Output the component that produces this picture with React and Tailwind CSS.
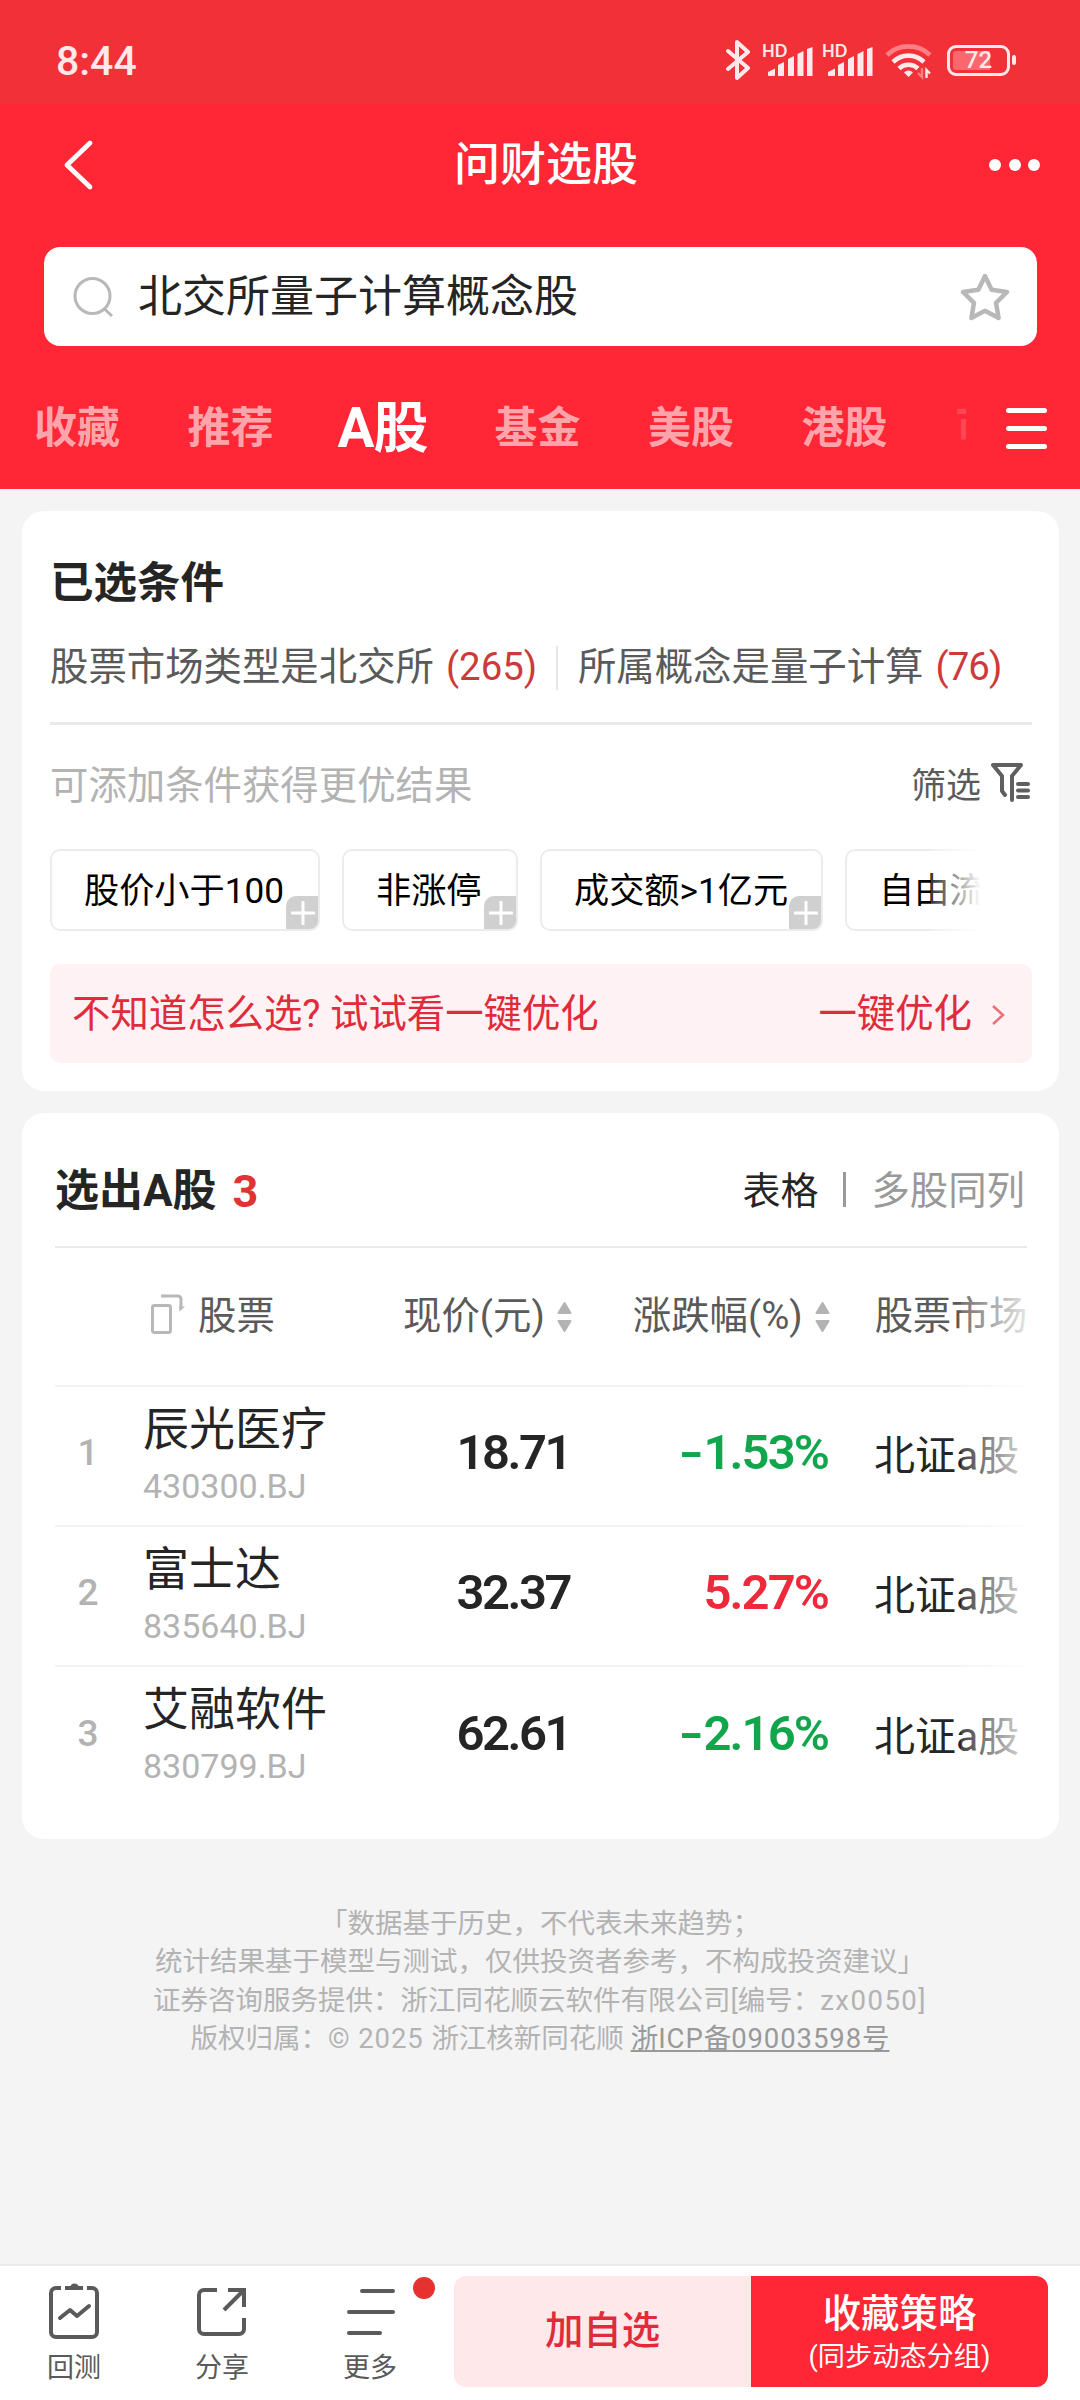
// src/App.jsx
import React from 'react';

const tabs = ['收藏', '推荐', 'A股', '基金', '美股', '港股'];

const stocks = [
  { name: '辰光医疗', code: '430300.BJ', price: '18.71', change: '-1.53%', up: false },
  { name: '富士达', code: '835640.BJ', price: '32.37', change: '5.27%', up: true },
  { name: '艾融软件', code: '830799.BJ', price: '62.61', change: '-2.16%', up: false },
];

const Signal = () => (
  <svg className="h-[36px] w-[54px] overflow-visible" viewBox="0 -2 54 36" fill="#ffe9ea">
    <text x="0" y="13" fontSize="16.500" fontWeight="700" fontFamily="Lato, sans-serif">HD</text>
    <path d="M6 31v-3l7-3.500v6.500a1 1 0 01-1 1H7a1 1 0 01-1-1z" />
    <path d="M16 32V21l6-3v14z" />
    <path d="M26 32V15l6-3v20z" />
    <path d="M35.500 32V10l6-3v25z" />
    <path d="M45 32V5l5.500-2v29z" />
  </svg>
);

const StatusBar = () => (
  <div className="flex h-[104px] items-center justify-between bg-[#f23038] pl-[56px] pr-[64px] pt-[16px] text-[#ffe9ea]">
    <span className="mt-[2px] text-[41px] leading-none font-medium">8:44</span>
    <div className="flex items-center">
      <svg className="mr-[11px] h-[40px] w-[26px]" viewBox="0 0 26 40" fill="none" stroke="#ffe9ea" strokeWidth="4" strokeLinejoin="round" strokeLinecap="round">
        <path d="M3 11l20 17-11 10V2l11 10L3 29" />
      </svg>
      <Signal />
      <span className="w-[6px]" />
      <Signal />
      <svg className="ml-[9px] h-[36px] w-[48px] overflow-visible" viewBox="0 0 48 36" fill="none" strokeWidth="4.600">
        <path d="M2 13a31 31 0 0143 0" stroke="#ff7f85" />
        <path d="M8 20a22 22 0 0131 0" stroke="#ffe9ea" />
        <path d="M14 26.500a14 14 0 0119 0" stroke="#ffe9ea" />
        <path d="M23.500 35l-4.500-4.500a6 6 0 019 0z" fill="#ffe9ea" stroke="none" />
        <path d="M37 26v9l-4-4M37 35v-9" stroke="#ff7f85" strokeWidth="2.400" />
        <path d="M41.500 36v-8l3.500 3.500" stroke="#ffe9ea" strokeWidth="2.400" />
      </svg>
      <div className="ml-[14px] flex h-[31px] w-[63px] items-center justify-center rounded-[9px] border-3 border-[#ffe9ea] bg-linear-to-r from-[#fa686e] from-70% to-[#f23038] to-70% bg-clip-content p-[3px]">
        <span className="text-[24px] leading-none font-medium">72</span>
      </div>
      <span className="ml-[2px] h-[10px] w-[4px] rounded-sm bg-[#ffe9ea]" />
    </div>
  </div>
);

const Header = () => (
  <header className="h-[489px] bg-[#ff2736] text-white">
    <StatusBar />
    <div className="flex h-[118px] items-center justify-between pl-[62px] pr-[40px]">
      <svg className="mt-[4px] h-[52px] w-[82px]" viewBox="0 0 82 52" fill="none" stroke="white" strokeWidth="4.800" strokeLinecap="round" strokeLinejoin="round">
        <path d="M28 4L5 26l23 22" />
      </svg>
      <h1 className="ml-[13px] mt-[2px] text-[46px] leading-none font-medium">问财选股</h1>
      <div className="mt-[3px] flex w-[105px] justify-end gap-[7.500px]">
        <span className="h-[12px] w-[12px] rounded-full bg-white" />
        <span className="h-[12px] w-[12px] rounded-full bg-white" />
        <span className="h-[12px] w-[12px] rounded-full bg-white" />
      </div>
    </div>
    <div className="mr-[43px] ml-[44px] mt-[25px] flex h-[99px] items-center rounded-[16px] bg-white pl-[29px] pr-[27px]">
      <svg className="h-[42px] w-[42px]" viewBox="0 0 42 42" fill="none" stroke="#b8b8b8" strokeWidth="3">
        <circle cx="19.500" cy="20" r="17.500" />
        <path d="M31 32.500l8 7.500" />
      </svg>
      <span className="ml-[23px] flex-1 text-[44px] leading-none text-[#252525]">北交所量子计算概念股</span>
      <svg className="h-[50px] w-[50px]" viewBox="0 0 50 50" fill="none" stroke="#b8b8b8" strokeWidth="4.500" strokeLinejoin="round">
        <path d="M25 4l6.600 13.800L47 20 36 30.800l2.600 15.200L25 38.800 11.400 46 14 30.800 3 20l15.400-2.200z" />
      </svg>
    </div>
    <div className="flex h-[143px] items-center pl-[34px] pr-[33px] pt-[22px]">
      <div className="flex flex-1 items-center">
        {tabs.map((tab) =>
          tab === 'A股' ? (
            <span key={tab} className="mr-[64px] w-[93px] text-[55px] leading-none font-bold tracking-[-1px] whitespace-nowrap">{tab}</span>
          ) : (
            <span
              key={tab}
              className={`text-[43px] leading-none font-bold whitespace-nowrap text-[#ffa4ab] ${tab === '推荐' ? 'mr-[64px]' : 'mr-[67.500px]'}`}
            >
              {tab}
            </span>
          )
        )}
        <span className="w-[11px] overflow-hidden text-[43px] leading-none font-bold text-[#ff4653]">可</span>
      </div>
      <div className="flex w-[41px] flex-col gap-[13px]">
        <span className="h-[5px] rounded-full bg-white" />
        <span className="h-[5px] rounded-full bg-white" />
        <span className="h-[5px] rounded-full bg-white" />
      </div>
    </div>
  </header>
);

const Chip = ({ label, width }) => (
  <div className={`relative flex h-[82px] shrink-0 items-center overflow-hidden rounded-[10px] border-2 border-[#ececec] pt-[4px] pl-[32px] ${width}`}>
    <span className="text-[35.200px] leading-none whitespace-nowrap text-black">{label}</span>
    <span className="absolute -right-px -bottom-px flex h-[34px] w-[33px] items-center justify-center rounded-tl-[10px] bg-[#d0d0d0]">
      <svg className="h-[24px] w-[24px]" viewBox="0 0 24 24" stroke="white" strokeWidth="3" strokeLinecap="round">
        <path d="M12 1v22M1 12h22" />
      </svg>
    </span>
  </div>
);

const Conditions = () => (
  <section className="mr-[21px] ml-[22px] mt-[22px] h-[580px] rounded-[22px] bg-white pr-[27px] pl-[28px] pt-[44px]">
    <h2 className="flex h-[54px] items-center pt-[3px] text-[43.500px] leading-none font-bold text-[#252525]">已选条件</h2>
    <div className="flex h-[116px] items-center border-b-3 border-[#e9e9e9] pt-[4px] text-[38.400px] leading-none whitespace-nowrap text-[#5a5a5a]">
      <span>股票市场类型是北交所</span>
      <span className="ml-[12px] w-[92px] text-[#cc3a3a]">(265)</span>
      <span className="ml-[18px] h-[44px] w-[2px] bg-[#e6e6e6]" />
      <span className="ml-[20px]">所属概念是量子计算</span>
      <span className="ml-[12px] tracking-[-0.9px] text-[#cc3a3a]">(76)</span>
    </div>
    <div className="flex h-[120px] items-center pt-[3px] leading-none">
      <span className="flex-1 text-[38.400px] text-[#b3b3b3]">可添加条件获得更优结果</span>
      <span className="text-[35px] text-[#5a5a5a]">筛选</span>
      <svg className="-mt-[10px] ml-[9px] h-[42px] w-[42px]" viewBox="0 0 42 42" fill="none" stroke="#5f5f5f" strokeWidth="4" strokeLinecap="round" strokeLinejoin="round">
        <path d="M15 34l-3-4V15L3 4h28l-9 11v24" />
        <path d="M28 23h10M28 29.500h10M28 36h10" />
      </svg>
    </div>
    <div className="relative mt-[4px] flex w-[931px] gap-[22px] overflow-hidden">
      <Chip label="股价小于100" width="w-[270px]" />
      <Chip label="非涨停" width="w-[176px]" />
      <Chip label="成交额>1亿元" width="w-[283px]" />
      <Chip label="自由流通市值" width="w-[280px]" />
      <div className="absolute top-0 right-0 h-full w-[50px] bg-linear-to-r from-white/20 to-white" />
    </div>
    <div className="mt-[33px] flex h-[99px] items-center rounded-[10px] bg-[#fff2f4] pl-[22px] pr-[26px] pt-[2px] text-[38.400px] leading-none text-[#e02b3b]">
      <span className="flex-1">不知道怎么选? 试试看一键优化</span>
      <span>一键优化</span>
      <svg className="ml-[18px] h-[22px] w-[16px]" viewBox="0 0 16 22" fill="none" stroke="#e8707b" strokeWidth="2.500">
        <path d="M3 2l10 9-10 9" />
      </svg>
    </div>
  </section>
);

const Sort = () => (
  <svg className="mt-[1px] ml-[11px] h-[32px] w-[17px]" viewBox="0 0 17 32" fill="#b3b3b3" stroke="#b3b3b3" strokeWidth="2" strokeLinejoin="round">
    <path d="M8.500 2l6 10h-12zM8.500 30l6-10h-12z" />
  </svg>
);

const Results = () => (
  <section className="mr-[21px] ml-[22px] mt-[22px] h-[726px] rounded-[22px] bg-white pr-[32px] pl-[33px]">
    <div className="flex h-[135px] items-center border-b-2 border-[#e9e9e9] pt-[23px] pr-[2px] leading-none">
      <h2 className="text-[44px] font-bold text-[#252525]">选出A股</h2>
      <span className="ml-[16px] flex-1 text-[45px] font-bold text-[#e03434]">3</span>
      <span className="text-[38px] text-[#252525]">表格</span>
      <span className="-mt-[4px] mr-[25px] ml-[25px] h-[35px] w-[3px] bg-[#999999]" />
      <span className="text-[38.400px] text-[#999999]">多股同列</span>
    </div>
    <div className="relative">
      <div className="flex h-[139px] items-center border-b-2 border-[#f3f3f3] pb-[1px] text-[38.400px] leading-none whitespace-nowrap text-[#5a5a5a]">
        <svg className="-mt-[4px] ml-[95px] h-[42px] w-[36px]" viewBox="0 0 36 42" fill="none" stroke="#b8b8b8" strokeWidth="3">
          <rect x="2.500" y="12.500" width="18" height="27" rx="2" />
          <path d="M11 3h17a3 3 0 013 3v9" />
          <path d="M29 13.500h6l-5.500 5z" fill="#b8b8b8" stroke="none" />
        </svg>
        <span className="ml-[12px] w-[77px]">股票</span>
        <div className="flex w-[298px] items-center justify-end">现价(元)<Sort /></div>
        <div className="flex w-[258px] items-center justify-end">涨跌幅(%)<Sort /></div>
        <span className="flex-1 pl-[44px] tracking-[-0.3px]">股票市场</span>
      </div>
      {stocks.map((stock, i) => (
        <div
          key={stock.code}
          className={`flex h-[140px] items-center leading-none whitespace-nowrap ${i < stocks.length - 1 ? 'border-b-2 border-[#f3f3f3]' : ''}`}
        >
          <span className="-mt-[8px] w-[66px] text-center text-[37px] font-medium text-[#b3b3b3]">{i + 1}</span>
          <div className="ml-[22px] flex h-full w-[215px] flex-col pt-[19px]">
            <span className="text-[46px] text-[#252525]">{stock.name}</span>
            <span className="mt-[17px] text-[34px] text-[#b3b3b3]">{stock.code}</span>
          </div>
          <span className="-mt-[8px] w-[212px] text-right text-[49px] font-semibold tracking-[-2.500px] text-[#252525]">{stock.price}</span>
          <span className={`-mt-[8px] w-[258px] text-right text-[49px] font-semibold tracking-[-1.900px] ${stock.up ? 'text-[#f0293a]' : 'text-[#12a64c]'}`}>
            {!stock.up && <span className="mr-[5px] inline-block scale-x-140">-</span>}
            {stock.change.replace('-', '')}
          </span>
          <span className="flex-1 pl-[46px] text-[41px] text-[#252525]">北证a股</span>
        </div>
      ))}
      <div className="absolute top-0 right-0 h-full w-[66px] bg-linear-to-r from-white/15 to-white/85" />
    </div>
  </section>
);

const Disclaimer = () => (
  <div className="h-[425px] pt-[66px] text-center text-[27.500px] leading-[38.400px] text-[#b3b3b3]">
    <p>「数据基于历史，不代表未来趋势；</p>
    <p>统计结果基于模型与测试，仅供投资者参考，不构成投资建议」</p>
    <p>
      证券咨询服务提供：浙江同花顺云软件有限公司[编号：<span className="tracking-[1.500px]">zx0050]</span>
    </p>
    <p>
      版权归属：<span className="tracking-[0.9px]">© 2025 </span>浙江核新同花顺{' '}
      <a className="text-[#999999] underline">浙<span className="tracking-[0.9px]">ICP</span>备<span className="tracking-[0.9px]">09003598</span>号</a>
    </p>
  </div>
);

const Action = ({ label, children }) => (
  <div className="flex w-[148px] flex-col items-center">
    <svg className="h-[60px] w-[60px]" viewBox="0 0 60 60" fill="none" stroke="#5a5a5a" strokeWidth="4">
      {children}
    </svg>
    <span className="mt-[15px] text-[27px] leading-none text-[#5a5a5a]">{label}</span>
  </div>
);

const BottomBar = () => (
  <footer className="relative flex h-[136px] border-t-2 border-[#e9e9e9] bg-white">
    <div className="flex w-[454px] pt-[14px]">
      <Action label="回测">
        <path d="M17 8h-5a5 5 0 00-5 5v39a5 5 0 005 5h36a5 5 0 005-5V13a5 5 0 00-5-5h-5" />
        <path d="M21 8h18" />
        <path d="M26 8a4.500 4.500 0 019 0z" fill="#5a5a5a" stroke="none" />
        <path d="M16 38l10-8 7 6 12-10" strokeLinecap="round" strokeLinejoin="round" />
      </Action>
      <Action label="分享">
        <path d="M25 10H12a5 5 0 00-5 5v34a5 5 0 005 5h35a5 5 0 005-5V38" />
        <path d="M36 10h16v17M51 11L32 30" />
      </Action>
      <Action label="更多">
        <path d="M22 11h31M9 32h44M9 53h31" strokeLinecap="round" />
      </Action>
    </div>
    <span className="absolute top-[11px] left-[413px] h-[22px] w-[22px] rounded-full bg-[#e63131]" />
    <div className="mt-[10px] flex h-[111px] w-[594px] overflow-hidden rounded-[12px] leading-none">
      <div className="flex w-[297px] items-center justify-center bg-[#ffe8ea] text-[38.400px] font-medium text-[#e02b3b]">加自选</div>
      <div className="flex w-[297px] flex-col items-center bg-[#ff2736] pt-[19px] text-white">
        <span className="text-[38.400px] font-medium">收藏策略</span>
        <span className="mt-[11px] text-[27.200px]">(同步动态分组)</span>
      </div>
    </div>
  </footer>
);

const App = () => {
  return (
    <div className="h-[2400px] w-[1080px] overflow-hidden bg-[#f4f4f4] font-[Roboto,'Noto_Sans_CJK_SC',sans-serif]">
      <Header />
      <Conditions />
      <Results />
      <Disclaimer />
      <BottomBar />
    </div>
  );
};

export default App;
